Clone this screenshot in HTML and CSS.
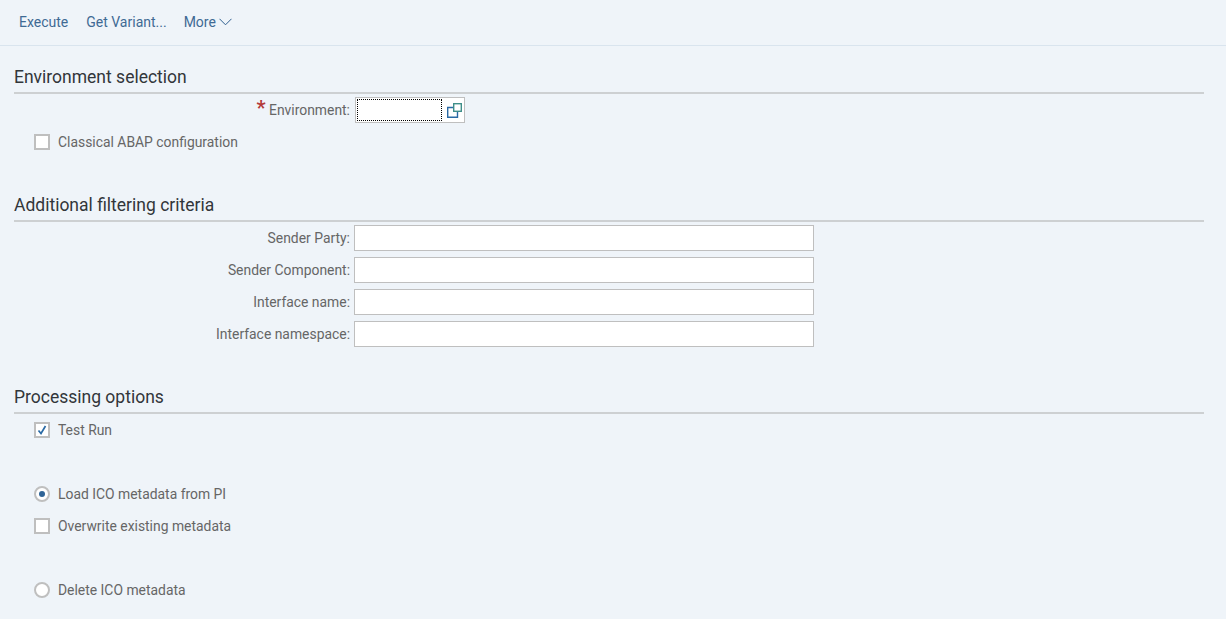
FILE: index.html
```html
<!DOCTYPE html>
<html lang="en">
<head>
<meta charset="utf-8">
<title>Selection</title>
<link rel="stylesheet" href="styles.css">
</head>
<body>
<nav class="toolbar">
  <a class="tool">Execute</a>
  <a class="tool">Get Variant...</a>
  <a class="tool">More
    <svg class="chev" width="13" height="8" viewBox="0 0 13 8"><path d="M0.5 0.800 6.500 6.800 12.500 0.800" fill="none" stroke="#2f5f8f" stroke-width="1"/></svg>
  </a>
</nav>
<main class="content">
  <section class="group group-env">
    <h2 class="title">Environment selection</h2>
    <div class="row">
      <label class="label"><span class="req">*</span> Environment:</label>
      <div class="f4">
        <span class="focus"></span>
        <svg class="f4-icon" width="15" height="15" viewBox="0 0 15 15"><path d="M6 4.500H.7V14.300H10.500V9" fill="none" stroke="#2a6aa5" stroke-width="1.400"/><rect x="6.700" y=".7" width="7.600" height="7.600" fill="none" stroke="#3f8f8a" stroke-width="1.400"/></svg>
      </div>
    </div>
    <div class="row check"><span class="box"></span><span class="text">Classical ABAP configuration</span></div>
  </section>
  <section class="group group-filter">
    <h2 class="title">Additional filtering criteria</h2>
    <div class="row"><label class="label">Sender Party:</label><span class="input"></span></div>
    <div class="row"><label class="label">Sender Component:</label><span class="input"></span></div>
    <div class="row"><label class="label">Interface name:</label><span class="input"></span></div>
    <div class="row"><label class="label">Interface namespace:</label><span class="input"></span></div>
  </section>
  <section class="group group-proc">
    <h2 class="title">Processing options</h2>
    <div class="row check"><span class="box"><svg width="12" height="12" viewBox="0 0 12 12"><path d="M2.500 6.500 5 9.500 9.500 2" fill="none" stroke="#2a6aa5" stroke-width="1.700"/></svg></span><span class="text">Test Run</span></div>
    <div class="row check gap-32"><span class="radio on"></span><span class="text">Load ICO metadata from PI</span></div>
    <div class="row check"><span class="box"></span><span class="text">Overwrite existing metadata</span></div>
    <div class="row check gap-32"><span class="radio"></span><span class="text">Delete ICO metadata</span></div>
  </section>
</main>
</body>
</html>
```
FILE: styles.css
```css
* { box-sizing: border-box; }
html, body { margin: 0; height: 100%; overflow: hidden; }
body {
  background: #eff4f9;
  font-family: Roboto, "Noto Sans", sans-serif;
  font-size: 13.9px;
  color: #666;
}
.toolbar {
  height: 46px;
  display: flex;
  align-items: center;
  gap: 18px;
  padding: 0 0 2px 19px;
  border-bottom: 1px solid #d9e4ee;
}
.tool { color: #3f6a94; font-size: 14px; display: flex; align-items: center; gap: 3px; }
.tool:last-child { margin-left: -1px; }
.chev { margin-top: 1px; }
.content { padding: 0 22px 0 14px; }
.group-env { padding-top: 19px; }
.group-filter { padding-top: 38px; }
.group-proc { padding-top: 38px; }
.title {
  margin: 0;
  height: 29px;
  font-size: 17.5px;
  font-weight: 400;
  line-height: 24px;
  color: #32363a;
  border-bottom: 2px solid #cdd0d2;
}
.row { display: flex; align-items: center; height: 26px; margin-top: 6px; }
.group .title + .row { margin-top: 3px; }
.label { width: 340px; text-align: right; padding-right: 4px; white-space: nowrap; }
.req { color: #b33a3a; font-size: 20px; font-weight: 700; line-height: 10px; }
.input { width: 460px; height: 26px; background: #fff; border: 1px solid #bfbfbf; }
.f4 {
  width: 110px;
  height: 26px;
  margin-left: 1px;
  background: #fff;
  border: 1px solid #bfbfbf;
  display: flex;
  align-items: center;
  padding-left: 1px;
}
.focus { width: 85px; height: 22px; border: 1px dotted #000; }
.f4-icon { margin-left: 5px; }
.check { padding-left: 20px; gap: 8px; }
.box {
  width: 16px;
  height: 16px;
  background: #fff;
  border: 2px solid #bfbfbf;
  display: flex;
  align-items: center;
  justify-content: center;
}
.radio {
  width: 16px;
  height: 16px;
  border-radius: 50%;
  background: #fff;
  border: 2px solid #bfbfbf;
  display: flex;
  align-items: center;
  justify-content: center;
}
.radio.on::after {
  content: "";
  width: 6px;
  height: 6px;
  border-radius: 50%;
  background: #2f6497;
}
.gap-32 { margin-top: 38px; }
```
